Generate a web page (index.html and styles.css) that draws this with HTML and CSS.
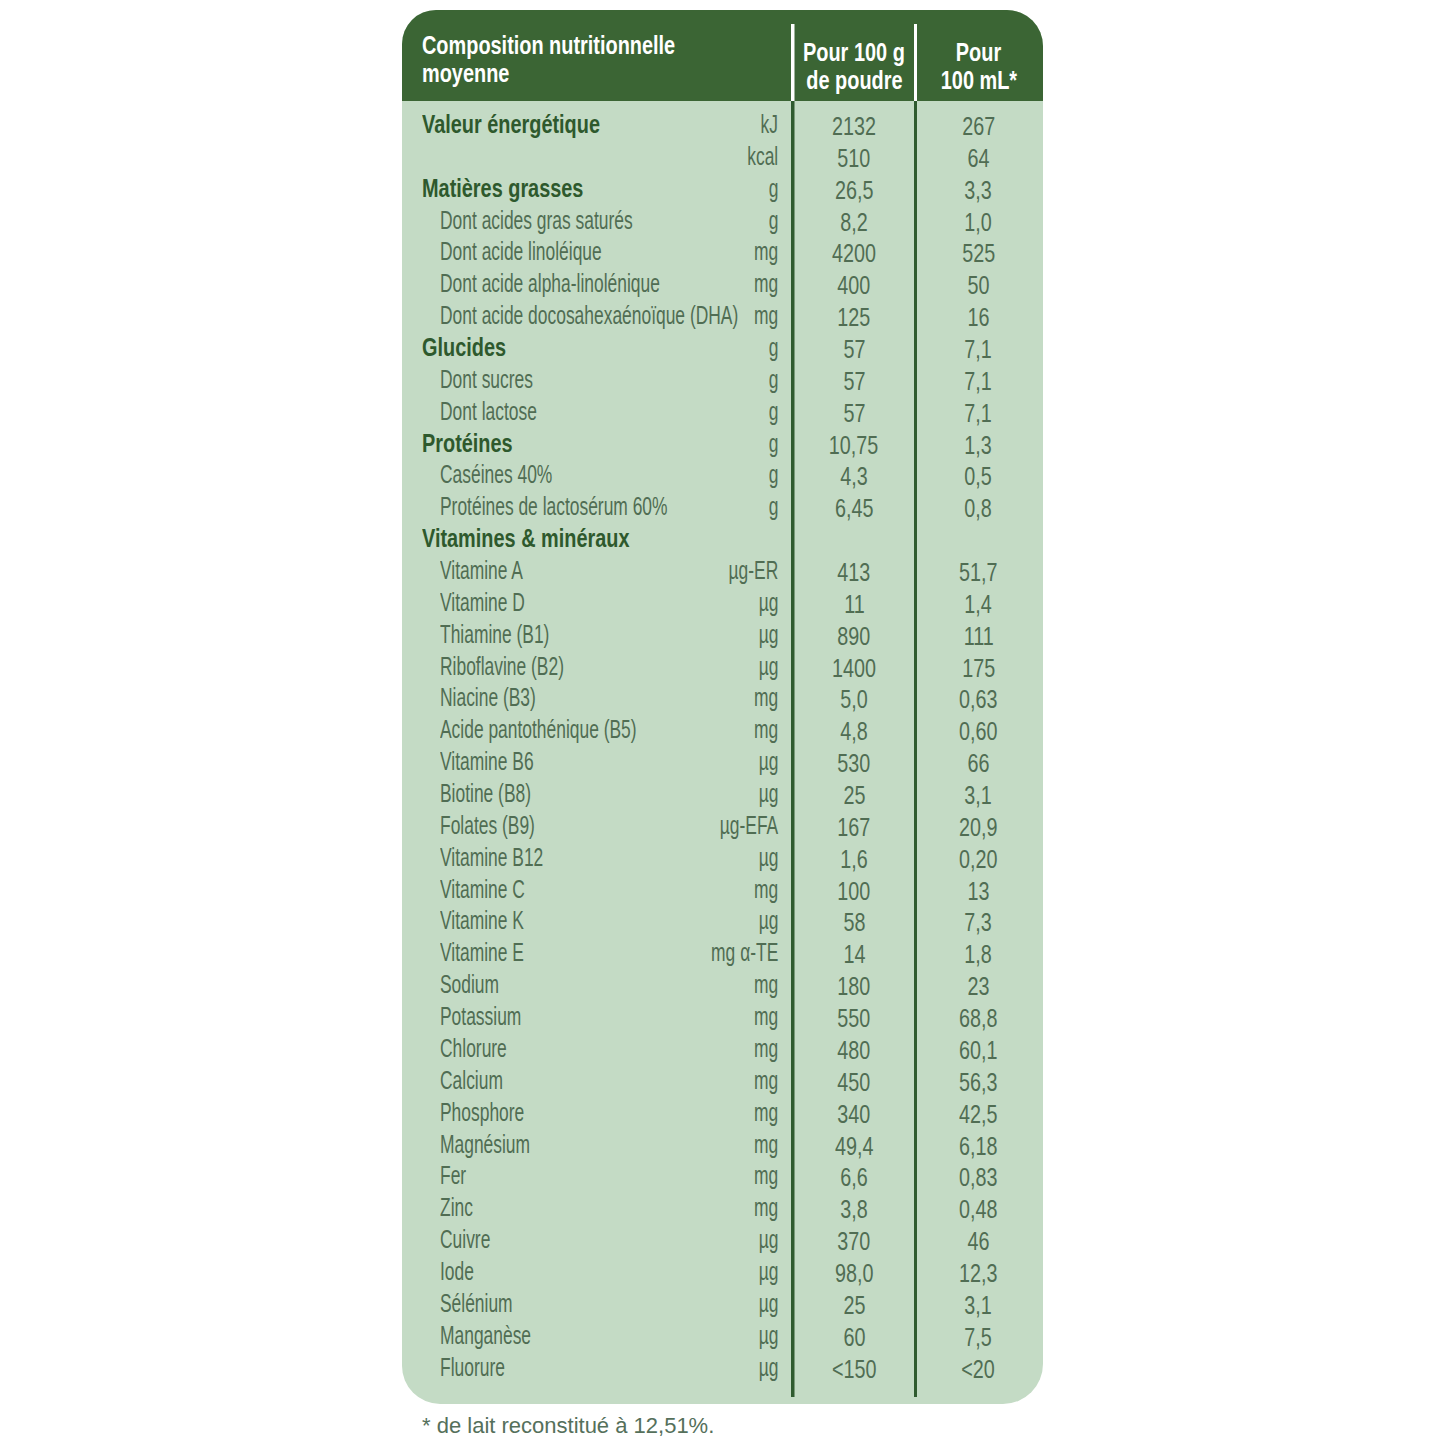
FILE: index.html
```html
<!DOCTYPE html>
<html lang="fr">
<head>
<meta charset="utf-8">
<title>Composition nutritionnelle moyenne</title>
<link rel="stylesheet" href="styles.css">
</head>
<body>
<main class="page">
  <section class="card">
    <header class="head">
      <div class="h-lab"><span class="th">Composition nutritionnelle</span><span class="th">moyenne</span></div>
      <div class="h-val"><span class="th c">Pour 100 g</span><span class="th c">de poudre</span></div>
      <div class="h-val h-last"><span class="th c">Pour</span><span class="th c">100 mL*</span></div>
    </header>
    <div class="rows">
      <div class="lab b"><span class="tb">Valeur énergétique</span></div><div class="unit"><span class="tr r">kJ</span></div><div class="v"><span class="tv">2132</span></div><div class="v v2"><span class="tv">267</span></div>
      <div class="lab"></div><div class="unit"><span class="tr r">kcal</span></div><div class="v"><span class="tv">510</span></div><div class="v v2"><span class="tv">64</span></div>
      <div class="lab b"><span class="tb">Matières grasses</span></div><div class="unit"><span class="tr r">g</span></div><div class="v"><span class="tv">26,5</span></div><div class="v v2"><span class="tv">3,3</span></div>
      <div class="lab i"><span class="tr">Dont acides gras saturés</span></div><div class="unit"><span class="tr r">g</span></div><div class="v"><span class="tv">8,2</span></div><div class="v v2"><span class="tv">1,0</span></div>
      <div class="lab i"><span class="tr">Dont acide linoléique</span></div><div class="unit"><span class="tr r">mg</span></div><div class="v"><span class="tv">4200</span></div><div class="v v2"><span class="tv">525</span></div>
      <div class="lab i"><span class="tr">Dont acide alpha-linolénique</span></div><div class="unit"><span class="tr r">mg</span></div><div class="v"><span class="tv">400</span></div><div class="v v2"><span class="tv">50</span></div>
      <div class="lab i"><span class="tr">Dont acide docosahexaénoïque (DHA)</span></div><div class="unit"><span class="tr r">mg</span></div><div class="v"><span class="tv">125</span></div><div class="v v2"><span class="tv">16</span></div>
      <div class="lab b"><span class="tb">Glucides</span></div><div class="unit"><span class="tr r">g</span></div><div class="v"><span class="tv">57</span></div><div class="v v2"><span class="tv">7,1</span></div>
      <div class="lab i"><span class="tr">Dont sucres</span></div><div class="unit"><span class="tr r">g</span></div><div class="v"><span class="tv">57</span></div><div class="v v2"><span class="tv">7,1</span></div>
      <div class="lab i"><span class="tr">Dont lactose</span></div><div class="unit"><span class="tr r">g</span></div><div class="v"><span class="tv">57</span></div><div class="v v2"><span class="tv">7,1</span></div>
      <div class="lab b"><span class="tb">Protéines</span></div><div class="unit"><span class="tr r">g</span></div><div class="v"><span class="tv">10,75</span></div><div class="v v2"><span class="tv">1,3</span></div>
      <div class="lab i"><span class="tr">Caséines 40%</span></div><div class="unit"><span class="tr r">g</span></div><div class="v"><span class="tv">4,3</span></div><div class="v v2"><span class="tv">0,5</span></div>
      <div class="lab i"><span class="tr">Protéines de lactosérum 60%</span></div><div class="unit"><span class="tr r">g</span></div><div class="v"><span class="tv">6,45</span></div><div class="v v2"><span class="tv">0,8</span></div>
      <div class="lab b"><span class="tb">Vitamines &amp; minéraux</span></div><div class="unit"></div><div class="v"></div><div class="v v2"></div>
      <div class="lab i"><span class="tr">Vitamine A</span></div><div class="unit"><span class="tr r">µg-ER</span></div><div class="v"><span class="tv">413</span></div><div class="v v2"><span class="tv">51,7</span></div>
      <div class="lab i"><span class="tr">Vitamine D</span></div><div class="unit"><span class="tr r">µg</span></div><div class="v"><span class="tv">11</span></div><div class="v v2"><span class="tv">1,4</span></div>
      <div class="lab i"><span class="tr">Thiamine (B1)</span></div><div class="unit"><span class="tr r">µg</span></div><div class="v"><span class="tv">890</span></div><div class="v v2"><span class="tv">111</span></div>
      <div class="lab i"><span class="tr">Riboflavine (B2)</span></div><div class="unit"><span class="tr r">µg</span></div><div class="v"><span class="tv">1400</span></div><div class="v v2"><span class="tv">175</span></div>
      <div class="lab i"><span class="tr">Niacine (B3)</span></div><div class="unit"><span class="tr r">mg</span></div><div class="v"><span class="tv">5,0</span></div><div class="v v2"><span class="tv">0,63</span></div>
      <div class="lab i"><span class="tr">Acide pantothénique (B5)</span></div><div class="unit"><span class="tr r">mg</span></div><div class="v"><span class="tv">4,8</span></div><div class="v v2"><span class="tv">0,60</span></div>
      <div class="lab i"><span class="tr">Vitamine B6</span></div><div class="unit"><span class="tr r">µg</span></div><div class="v"><span class="tv">530</span></div><div class="v v2"><span class="tv">66</span></div>
      <div class="lab i"><span class="tr">Biotine (B8)</span></div><div class="unit"><span class="tr r">µg</span></div><div class="v"><span class="tv">25</span></div><div class="v v2"><span class="tv">3,1</span></div>
      <div class="lab i"><span class="tr">Folates (B9)</span></div><div class="unit"><span class="tr r">µg-EFA</span></div><div class="v"><span class="tv">167</span></div><div class="v v2"><span class="tv">20,9</span></div>
      <div class="lab i"><span class="tr">Vitamine B12</span></div><div class="unit"><span class="tr r">µg</span></div><div class="v"><span class="tv">1,6</span></div><div class="v v2"><span class="tv">0,20</span></div>
      <div class="lab i"><span class="tr">Vitamine C</span></div><div class="unit"><span class="tr r">mg</span></div><div class="v"><span class="tv">100</span></div><div class="v v2"><span class="tv">13</span></div>
      <div class="lab i"><span class="tr">Vitamine K</span></div><div class="unit"><span class="tr r">µg</span></div><div class="v"><span class="tv">58</span></div><div class="v v2"><span class="tv">7,3</span></div>
      <div class="lab i"><span class="tr">Vitamine E</span></div><div class="unit"><span class="tr r">mg α-TE</span></div><div class="v"><span class="tv">14</span></div><div class="v v2"><span class="tv">1,8</span></div>
      <div class="lab i"><span class="tr">Sodium</span></div><div class="unit"><span class="tr r">mg</span></div><div class="v"><span class="tv">180</span></div><div class="v v2"><span class="tv">23</span></div>
      <div class="lab i"><span class="tr">Potassium</span></div><div class="unit"><span class="tr r">mg</span></div><div class="v"><span class="tv">550</span></div><div class="v v2"><span class="tv">68,8</span></div>
      <div class="lab i"><span class="tr">Chlorure</span></div><div class="unit"><span class="tr r">mg</span></div><div class="v"><span class="tv">480</span></div><div class="v v2"><span class="tv">60,1</span></div>
      <div class="lab i"><span class="tr">Calcium</span></div><div class="unit"><span class="tr r">mg</span></div><div class="v"><span class="tv">450</span></div><div class="v v2"><span class="tv">56,3</span></div>
      <div class="lab i"><span class="tr">Phosphore</span></div><div class="unit"><span class="tr r">mg</span></div><div class="v"><span class="tv">340</span></div><div class="v v2"><span class="tv">42,5</span></div>
      <div class="lab i"><span class="tr">Magnésium</span></div><div class="unit"><span class="tr r">mg</span></div><div class="v"><span class="tv">49,4</span></div><div class="v v2"><span class="tv">6,18</span></div>
      <div class="lab i"><span class="tr">Fer</span></div><div class="unit"><span class="tr r">mg</span></div><div class="v"><span class="tv">6,6</span></div><div class="v v2"><span class="tv">0,83</span></div>
      <div class="lab i"><span class="tr">Zinc</span></div><div class="unit"><span class="tr r">mg</span></div><div class="v"><span class="tv">3,8</span></div><div class="v v2"><span class="tv">0,48</span></div>
      <div class="lab i"><span class="tr">Cuivre</span></div><div class="unit"><span class="tr r">µg</span></div><div class="v"><span class="tv">370</span></div><div class="v v2"><span class="tv">46</span></div>
      <div class="lab i"><span class="tr">Iode</span></div><div class="unit"><span class="tr r">µg</span></div><div class="v"><span class="tv">98,0</span></div><div class="v v2"><span class="tv">12,3</span></div>
      <div class="lab i"><span class="tr">Sélénium</span></div><div class="unit"><span class="tr r">µg</span></div><div class="v"><span class="tv">25</span></div><div class="v v2"><span class="tv">3,1</span></div>
      <div class="lab i"><span class="tr">Manganèse</span></div><div class="unit"><span class="tr r">µg</span></div><div class="v"><span class="tv">60</span></div><div class="v v2"><span class="tv">7,5</span></div>
      <div class="lab i"><span class="tr">Fluorure</span></div><div class="unit"><span class="tr r">µg</span></div><div class="v"><span class="tv">&lt;150</span></div><div class="v v2"><span class="tv">&lt;20</span></div>
    </div>
  </section>
  <p class="note">* de lait reconstitué à 12,51%.</p>
</main>
</body>
</html>
```

FILE: styles.css
```css
html, body {
  margin: 0;
  padding: 0;
  background: #ffffff;
}

.page {
  padding: 10px 0 0 402px;
  font-family: "Liberation Sans", Arial, sans-serif;
}

.card {
  width: 641px;
  background: #c4dbc5;
  border-radius: 34px 36px 40px 38px;
  overflow: hidden;
}

.head {
  display: grid;
  grid-template-columns: 392px 120px 129px;
  height: 91px;
  padding-top: 14px;
  box-sizing: border-box;
  background-color: #3b6534;
  background-image:
    linear-gradient(#ffffff, #ffffff),
    linear-gradient(#ffffff, #ffffff);
  background-repeat: no-repeat;
  background-size: 3.5px 77px, 3px 77px;
  background-position: 388.5px 14px, 512px 14px;
  color: #ffffff;
  font-size: 25px;
  line-height: 28px;
  font-weight: 700;
}

.h-lab {
  display: flex;
  flex-direction: column;
  align-items: flex-start;
  padding: 7px 0 0 20px;
}

.h-val {
  display: flex;
  flex-direction: column;
  align-items: center;
  padding-top: 14px;
  min-width: 0;
}

.h-last {
  padding: 14px 3px 0 3px;
}

.rows {
  display: grid;
  grid-template-columns: 270px 122px 120px 129px;
  grid-auto-rows: 31.87px;
  padding: 8px 0 21px 0;
  background-image:
    linear-gradient(#2f5b2f, #2f5b2f),
    linear-gradient(#2f5b2f, #2f5b2f);
  background-repeat: no-repeat;
  background-size: 3.5px calc(100% - 7px), 3px calc(100% - 7px);
  background-position: 388.5px 0, 512px 0;
  font-size: 26px;
  line-height: 31.87px;
  color: #506d53;
}

.lab {
  padding-left: 20px;
  white-space: nowrap;
  min-width: 0;
}

.lab.i {
  padding-left: 38px;
}

.lab.b {
  color: #2e592d;
  font-weight: 700;
}

.unit {
  display: flex;
  justify-content: flex-end;
  padding-right: 16px;
  white-space: nowrap;
  min-width: 0;
}

.v {
  display: flex;
  justify-content: center;
  padding-top: 2px;
  white-space: nowrap;
  min-width: 0;
}

.v2 {
  padding-left: 3px;
  padding-right: 3px;
}

.th,
.tb,
.tr,
.tv {
  display: inline-block;
  white-space: nowrap;
  transform-origin: left center;
  flex: none;
}

.th {
  transform: scaleX(0.796);
}

.tb {
  transform: scaleX(0.765);
}

.tr {
  transform: scaleX(0.67);
}

.tv {
  transform: scaleX(0.76);
  transform-origin: center center;
}

.th.c {
  transform-origin: center center;
}

.tr.r {
  transform-origin: right center;
}

.note {
  margin: 9px 0 0 0;
  padding-left: 20px;
  font-size: 22px;
  line-height: 26px;
  color: #55705b;
}
```
